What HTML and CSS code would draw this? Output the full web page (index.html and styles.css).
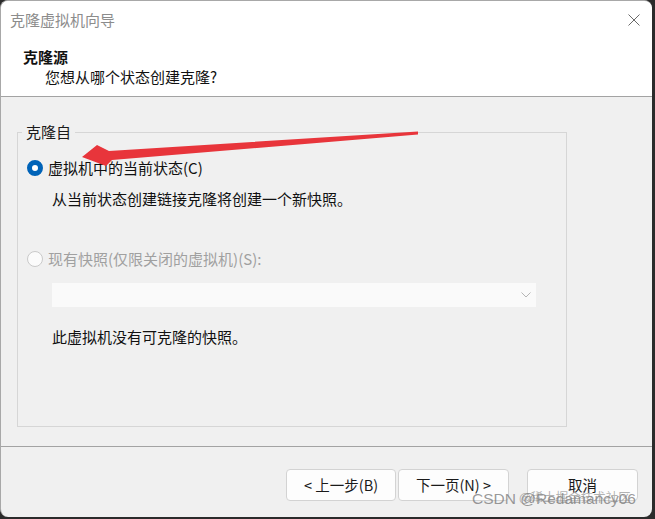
FILE: index.html
```html
<!DOCTYPE html>
<html lang="zh-CN">
<head>
<meta charset="utf-8">
<title>克隆虚拟机向导</title>
<link rel="stylesheet" href="styles.css">
</head>
<body>
<div class="window">
  <header class="header">
    <div class="titlebar">
      <span class="title">克隆虚拟机向导</span>
      <svg class="close" width="12" height="12" viewBox="0 0 12 12"><path d="M0.5 0.5 L11.5 11.5 M11.5 0.5 L0.5 11.5" stroke="#6a6a6a" stroke-width="1" fill="none"/></svg>
    </div>
    <div class="heading">克隆源</div>
    <div class="subheading">您想从哪个状态创建克隆?</div>
  </header>
  <main class="content">
    <fieldset class="group">
      <legend class="legend">克隆自</legend>
      <div class="group-inner">
        <div class="option">
          <span class="radio checked"></span>
          <span class="option-label">虚拟机中的当前状态(C)</span>
        </div>
        <div class="desc desc-first">从当前状态创建链接克隆将创建一个新快照。</div>
        <div class="option option-second disabled">
          <span class="radio"></span>
          <span class="option-label">现有快照(仅限关闭的虚拟机)(S):</span>
        </div>
        <div class="combo">
          <svg class="chevron" width="10" height="6" viewBox="0 0 10 6"><path d="M0.5 0.5 L5 5 L9.5 0.5" stroke="#b5b5b5" stroke-width="1" fill="none"/></svg>
        </div>
        <div class="desc desc-last">此虚拟机没有可克隆的快照。</div>
      </div>
    </fieldset>
  </main>
  <footer class="footer">
    <button class="btn btn-back">&lt; 上一步(B)</button>
    <button class="btn btn-next">下一页(N) &gt;</button>
    <button class="btn btn-cancel">取消</button>
  </footer>
  <svg class="arrow" width="655" height="519" viewBox="0 0 655 519">
    <polygon points="418,131.5 418,134.5 112,160 106,166 82,157 97,145 109,151" fill="#e8353b"/>
  </svg>
  <div class="watermark">
    <span class="wm-a">CSDN @Redamancy06</span>
    <span class="wm-b">@稀土掘金技术社区</span>
  </div>
</div>
</body>
</html>
```

FILE: styles.css
```css
html, body {
  margin: 0;
  padding: 0;
}
body {
  background: #2b2b2b;
  width: 655px;
  height: 519px;
  overflow: hidden;
  font-family: "Noto Sans CJK SC", "Noto Sans", sans-serif;
  font-size: 15px;
  color: #1a1a1a;
}
.window {
  position: relative;
  width: 652px;
  height: 517px;
  box-sizing: border-box;
  background: #f0f0f0;
  border-left: 1px solid #a8a8a8;
  border-top: 1px solid #a8a8a8;
  border-radius: 8px;
  overflow: hidden;
  display: flex;
  flex-direction: column;
}
.header {
  background: #ffffff;
  height: 96px;
  box-sizing: border-box;
  border-bottom: 1px solid #a3a3a3;
  flex: none;
}
.titlebar {
  height: 37px;
  display: flex;
  align-items: center;
  justify-content: space-between;
  padding: 0 12px 0 9px;
}
.title {
  color: #8c8c8c;
  font-size: 15px;
}
.close {
  display: block;
}
.heading {
  margin-top: 9px;
  padding-left: 22px;
  font-weight: bold;
  font-size: 15px;
  line-height: 20px;
  color: #111;
}
.subheading {
  padding-left: 44px;
  font-size: 15px;
  line-height: 20px;
  color: #111;
}
.content {
  flex: 1;
  padding: 25px 0 0 16px;
  border-bottom: 1px solid #a3a3a3;
}
.group {
  width: 550px;
  height: 305px;
  box-sizing: border-box;
  margin: 0;
  padding: 0;
  border: 1px solid #d6d6d6;
}
.legend {
  margin-left: 4px;
  padding: 0 4px;
  font-size: 15px;
  line-height: 20px;
  color: #1a1a1a;
}
.group-inner {
  padding-top: 16px;
}
.option {
  display: flex;
  align-items: center;
  height: 20px;
  padding-left: 9px;
}
.option-label {
  margin-left: 5px;
  font-size: 15px;
  line-height: 20px;
  color: #111;
}
.radio {
  width: 16px;
  height: 16px;
  box-sizing: border-box;
  border-radius: 50%;
  border: 1px solid #c9c9c9;
  background: #fbfbfb;
  flex: none;
}
.radio.checked {
  border: 5px solid #0063b8;
  background: #ffffff;
}
.disabled .option-label {
  color: #a0a0a0;
}
.desc {
  padding-left: 34px;
  font-size: 15px;
  line-height: 20px;
  color: #111;
}
.desc-first {
  margin-top: 11px;
}
.option-second {
  margin-top: 40px;
}
.combo {
  margin: 14px 0 0 34px;
  width: 484px;
  height: 24px;
  background: #fafafa;
  display: flex;
  align-items: center;
  justify-content: flex-end;
  padding-right: 5px;
  box-sizing: border-box;
}
.desc-last {
  margin-top: 20px;
}
.footer {
  flex: none;
  height: 70px;
  box-sizing: border-box;
  display: flex;
  align-items: flex-start;
  padding: 22px 0 0 285px;
}
.btn {
  height: 32px;
  box-sizing: border-box;
  background: #fdfdfd;
  border: 1px solid #d3d3d3;
  border-radius: 4px;
  font-family: "Noto Sans CJK SC", "Noto Sans", sans-serif;
  font-size: 14.5px;
  color: #1a1a1a;
  padding: 0;
  line-height: 30px;
}
.btn-back {
  width: 110px;
}
.btn-next {
  width: 111px;
  margin-left: 2px;
}
.btn-cancel {
  width: 111px;
  margin-left: 18px;
}
.arrow {
  position: absolute;
  left: -1px;
  top: -1px;
  pointer-events: none;
}
.watermark {
  position: absolute;
  left: 471px;
  top: 487px;
  height: 22px;
  width: 165px;
  pointer-events: none;
}
.wm-a {
  position: absolute;
  left: 0;
  top: 0;
  font-family: "Liberation Sans", sans-serif;
  font-size: 15.5px;
  line-height: 22px;
  color: rgba(120, 120, 120, 0.75);
  white-space: nowrap;
}
.wm-b {
  position: absolute;
  left: 47px;
  top: -1px;
  font-size: 12.5px;
  line-height: 20px;
  color: rgba(130, 130, 130, 0.6);
  white-space: nowrap;
}
```
